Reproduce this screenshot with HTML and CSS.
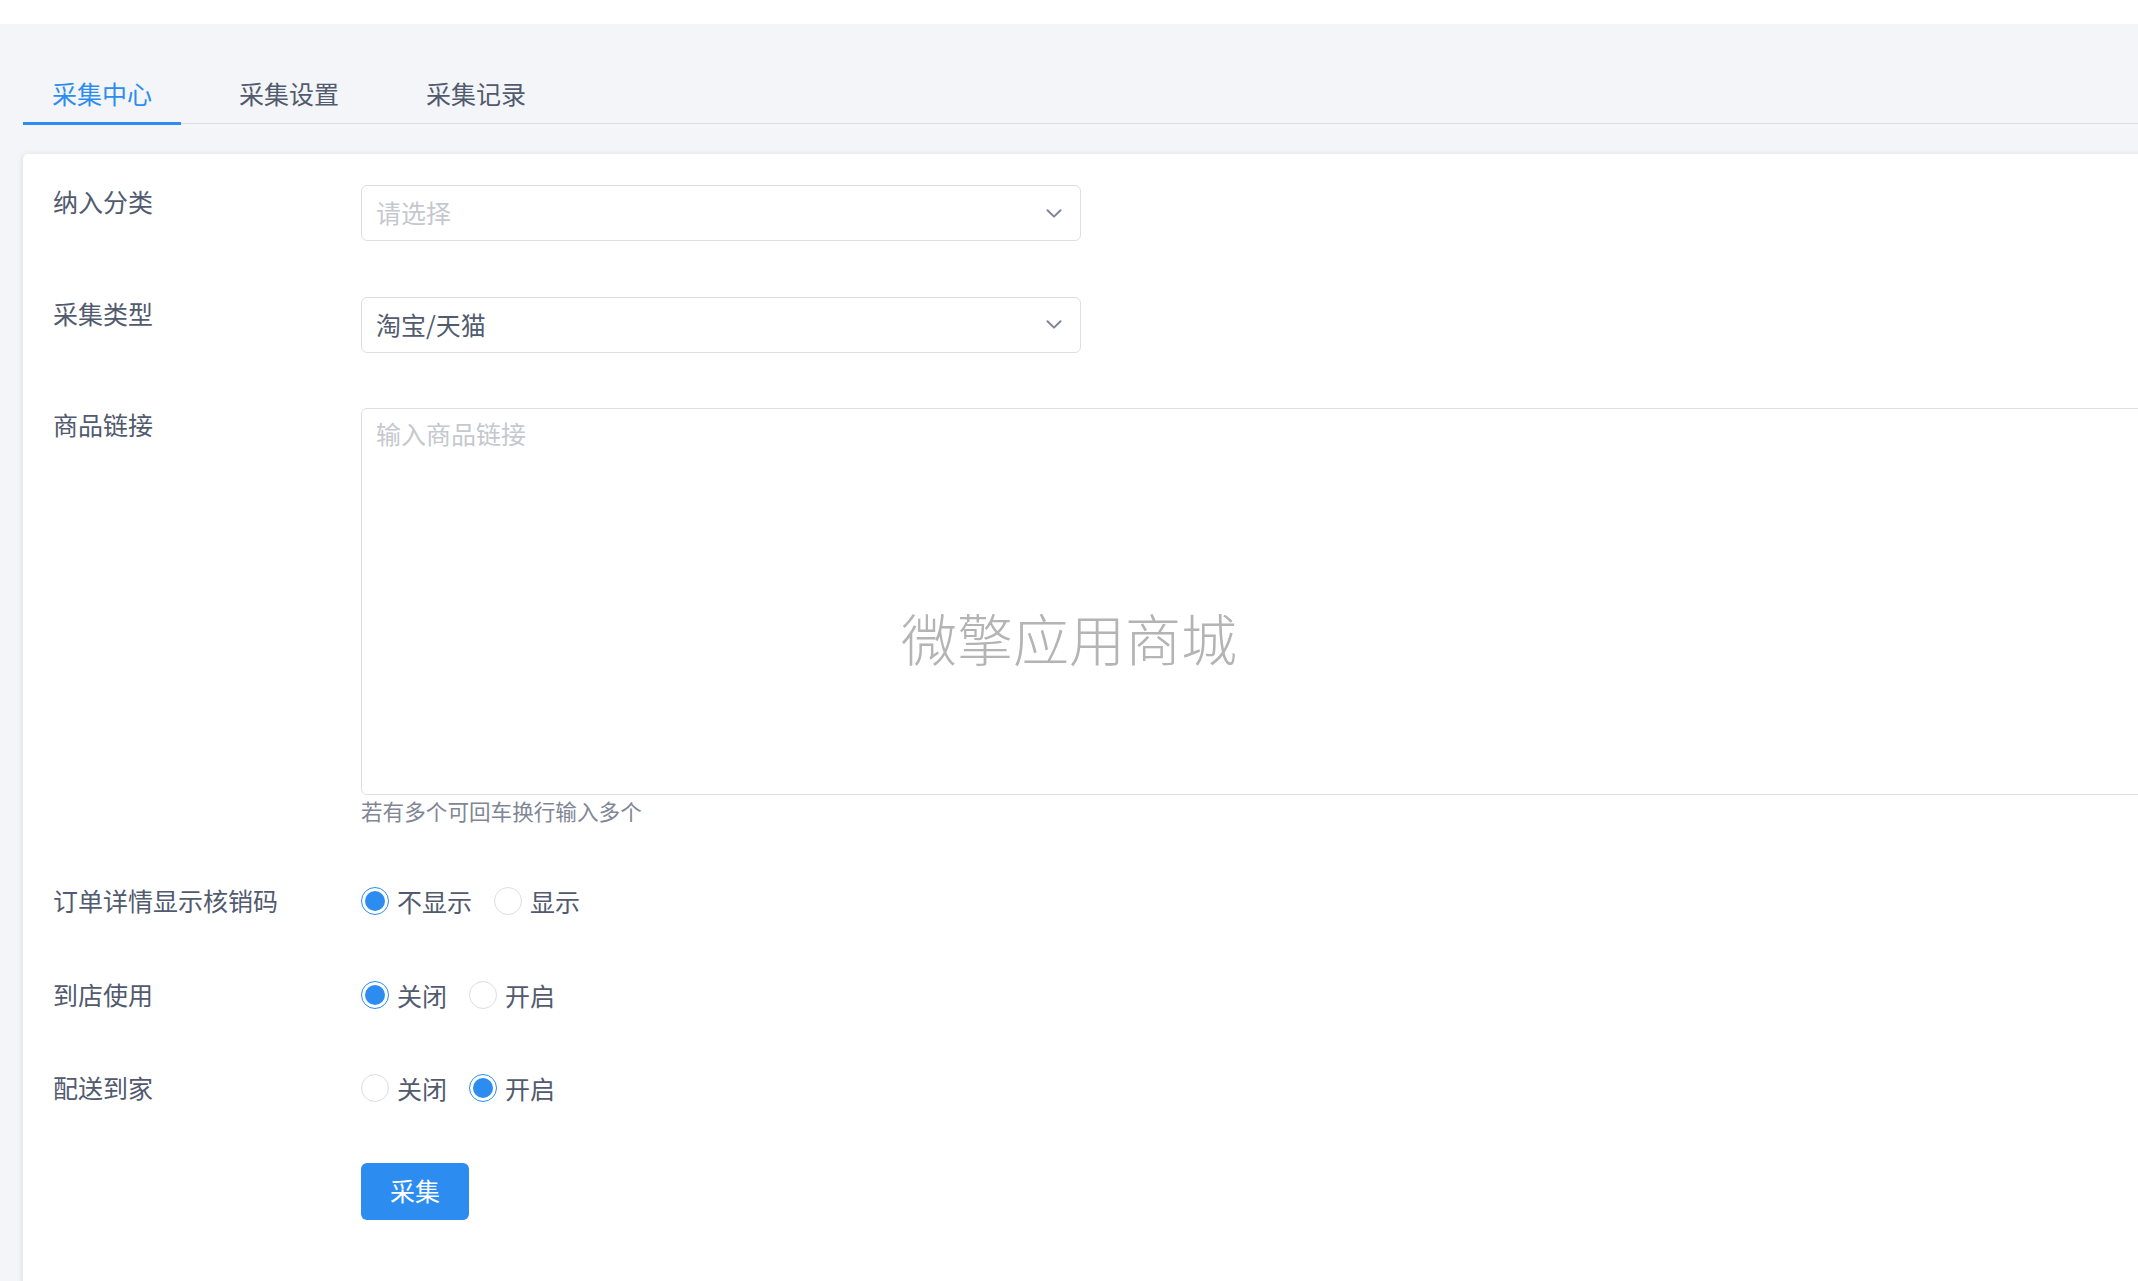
FILE: index.html
```html
<!DOCTYPE html>
<html lang="zh-CN">
<head>
<meta charset="utf-8">
<title>采集中心</title>
<link rel="stylesheet" href="styles.css">
</head>
<body>
<div class="topbar"></div>
<div class="page">
  <div class="content">
    <nav class="tabs">
      <div class="tab active">采集中心</div>
      <div class="tab">采集设置</div>
      <div class="tab">采集记录</div>
    </nav>
    <section class="card">
      <div class="form-item">
        <div class="label">纳入分类</div>
        <div class="select">
          <span class="placeholder">请选择</span>
          <svg class="chev" width="16" height="9" viewBox="0 0 16 9"><path d="M1.5 1.2 L8 7.6 L14.5 1.2" fill="none" stroke="#808695" stroke-width="2" stroke-linecap="round" stroke-linejoin="round"/></svg>
        </div>
      </div>
      <div class="form-item">
        <div class="label">采集类型</div>
        <div class="select">
          <span class="value">淘宝/天猫</span>
          <svg class="chev" width="16" height="9" viewBox="0 0 16 9"><path d="M1.5 1.2 L8 7.6 L14.5 1.2" fill="none" stroke="#808695" stroke-width="2" stroke-linecap="round" stroke-linejoin="round"/></svg>
        </div>
      </div>
      <div class="form-item">
        <div class="label">商品链接</div>
        <div class="field">
          <div class="textarea"><span class="placeholder">输入商品链接</span></div>
          <div class="help">若有多个可回车换行输入多个</div>
        </div>
      </div>
      <div class="form-item radio-row">
        <div class="label">订单详情显示核销码</div>
        <div class="radio-group">
          <label class="radio checked"><span class="dot"></span>不显示</label>
          <label class="radio"><span class="dot"></span>显示</label>
        </div>
      </div>
      <div class="form-item radio-row">
        <div class="label">到店使用</div>
        <div class="radio-group">
          <label class="radio checked"><span class="dot"></span>关闭</label>
          <label class="radio"><span class="dot"></span>开启</label>
        </div>
      </div>
      <div class="form-item radio-row">
        <div class="label">配送到家</div>
        <div class="radio-group">
          <label class="radio"><span class="dot"></span>关闭</label>
          <label class="radio checked"><span class="dot"></span>开启</label>
        </div>
      </div>
      <div class="form-item">
        <div class="label"></div>
        <button class="btn">采集</button>
      </div>
    </section>
  </div>
</div>
<div class="watermark">微擎应用商城</div>
</body>
</html>
```
FILE: styles.css
```css
html, body {
  margin: 0;
  padding: 0;
  overflow: hidden;
  height: 100%;
}
body {
  background: #ffffff;
  font-family: "Noto Sans CJK SC", "Noto Sans", sans-serif;
  color: #515a6e;
  font-size: 25px;
}
.topbar {
  height: 24px;
  background: #ffffff;
}
.page {
  background: #f4f5f8;
  height: calc(100% - 24px);
  padding-left: 23px;
  box-sizing: border-box;
}
.content {
  width: 2400px;
  padding-top: 42px;
}
.tabs {
  display: flex;
  gap: 29px;
  height: 57px;
  border-bottom: 1px solid #dcdee2;
}
.tab {
  position: relative;
  padding: 0 29px;
  line-height: 54px;
  height: 57px;
  color: #515a6e;
  white-space: nowrap;
}
.tab.active {
  color: #2d8cf0;
}
.tab.active::after {
  content: "";
  position: absolute;
  left: 0;
  right: 0;
  bottom: -2px;
  height: 3px;
  background: #2d8cf0;
}
.card {
  margin-top: 30px;
  background: #ffffff;
  border-radius: 5px;
  box-shadow: 0 1px 6px rgba(0, 0, 0, 0.12);
  padding: 31px 0 200px 30px;
}
.form-item {
  display: flex;
  align-items: flex-start;
  margin-bottom: 55.5px;
}
.label {
  width: 308px;
  flex: none;
  line-height: 32px;
  white-space: nowrap;
}
.radio-row .label {
  line-height: 36px;
}
.select {
  width: 720px;
  height: 56px;
  box-sizing: border-box;
  border: 1px solid #dcdee2;
  border-radius: 6px;
  display: flex;
  align-items: center;
  justify-content: space-between;
  padding: 0 18px 2px 14px;
}
.chev {
  display: block;
  margin-top: 2px;
}
.placeholder {
  color: #c5c8ce;
}
.value {
  color: #515a6e;
}
.field {
  display: flex;
  flex-direction: column;
}
.textarea {
  width: 1900px;
  height: 387px;
  box-sizing: border-box;
  border: 1px solid #dcdee2;
  border-radius: 6px;
  padding: 7px 14px;
  line-height: 34px;
}
.help {
  font-size: 21.6px;
  line-height: 31.5px;
  color: #808695;
}
.radio-group {
  display: flex;
  align-items: center;
  height: 38px;
  gap: 22px;
}
.radio {
  display: flex;
  align-items: center;
  gap: 8px;
  line-height: 34px;
  white-space: nowrap;
}
.dot {
  width: 28px;
  height: 28px;
  box-sizing: border-box;
  border: 1px solid #dcdee2;
  border-radius: 50%;
  background: #ffffff;
  position: relative;
}
.radio.checked .dot {
  border-color: #2d8cf0;
}
.radio.checked .dot::after {
  content: "";
  position: absolute;
  left: 3px;
  top: 3px;
  width: 20px;
  height: 20px;
  border-radius: 50%;
  background: #2d8cf0;
}
.btn {
  width: 108px;
  height: 57px;
  border: none;
  border-radius: 6px;
  background: #2d8cf0;
  color: #ffffff;
  font-family: inherit;
  font-size: 25px;
  line-height: 54px;
  padding: 0 0 3px;
}
.watermark {
  position: fixed;
  left: 50%;
  top: 50%;
  transform: translate(-50%, calc(-50% - 5px));
  font-size: 56px;
  font-weight: 300;
  color: #b4b4b4;
  white-space: nowrap;
  pointer-events: none;
}
```
